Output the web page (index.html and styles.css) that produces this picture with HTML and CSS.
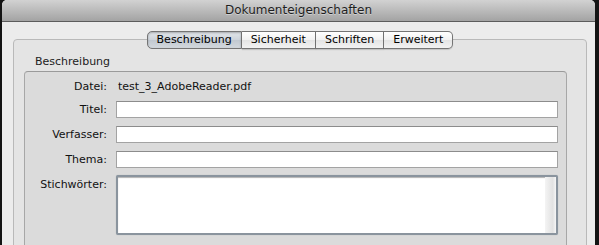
FILE: index.html
```html
<!DOCTYPE html>
<html lang="de">
<head>
  <meta charset="UTF-8">
  <meta name="viewport" content="width=device-width, initial-scale=1.0">
  <title>Dokumenteigenschaften</title>
  <link rel="stylesheet" href="styles.css">
</head>
<body>
  <div class="window">
    <div class="titlebar">Dokumenteigenschaften</div>

    <div class="content">
      <div class="tabs">
        <span class="tab selected">Beschreibung</span>
        <span class="tab">Sicherheit</span>
        <span class="tab">Schriften</span>
        <span class="tab">Erweitert</span>
      </div>

      <div class="tabbox">
        <div class="group-title">Beschreibung</div>
        <div class="group">
          <div class="row info">
            <span class="label">Datei:</span>
            <span class="value">test_3_AdobeReader.pdf</span>
          </div>
          <div class="row">
            <label class="label" for="titel">Titel:</label>
            <input class="field" type="text" id="titel">
          </div>
          <div class="row">
            <label class="label" for="verfasser">Verfasser:</label>
            <input class="field" type="text" id="verfasser">
          </div>
          <div class="row">
            <label class="label" for="thema">Thema:</label>
            <input class="field" type="text" id="thema">
          </div>
          <div class="row keywords">
            <label class="label top" for="stichwoerter">Stichwörter:</label>
            <div class="textarea">
              <textarea id="stichwoerter"></textarea>
              <div class="scroller"></div>
            </div>
          </div>
          <div class="row">
            <span class="label">Erstellt:</span>
            <span class="value">03.04.2009 14:22:10</span>
          </div>
        </div>
      </div>
    </div>
  </div>
</body>
</html>
```

FILE: styles.css
```css
body {
  margin: 0;
  padding: 0;
  background: #141414;
  font-family: "DejaVu Sans", sans-serif;
  font-size: 11px;
  color: #111;
  overflow: hidden;
}
.window {
  margin-left: 2px;
  width: 593px;
  height: 245px;
  background: #ececec;
  border-radius: 5px 5px 0 0;
  overflow: hidden;
}
.titlebar {
  height: 21px;
  line-height: 21px;
  border-bottom: 1px solid #5c5c5c;
  background: linear-gradient(#d2d2d2, #a3a3a3);
  text-align: center;
  font-size: 12px;
  color: #1e1e1e;
  text-shadow: 0 1px 0 rgba(255, 255, 255, 0.4);
}
.content {
  padding: 9px 8px 0 11px;
}
.tabs {
  display: flex;
  justify-content: center;
  position: relative;
  z-index: 1;
}
.tab {
  height: 16px;
  line-height: 16px;
  padding: 0 9px;
  border: 1px solid #747474;
  border-left: none;
  color: #000;
  background: linear-gradient(#ffffff, #f1f1f1 50%, #e4e4e4 51%, #f2f2f2);
  box-shadow: 0 1px 1px rgba(0, 0, 0, 0.15);
}
.tab:first-child {
  border-left: 1px solid #747474;
  border-radius: 5px 0 0 5px;
}
.tab:last-child {
  border-radius: 0 5px 5px 0;
}
.tab.selected {
  background: linear-gradient(#e2e6ea, #cdd3da 50%, #c1c8d0 51%, #d3d8dd);
  box-shadow: inset 0 1px 2px rgba(0, 0, 0, 0.25);
}
.tabbox {
  margin-top: -10px;
  height: 220px;
  border: 1px solid #b9b9b9;
  border-radius: 4px;
  background: #e4e4e4;
  padding: 15px 19px 0 10px;
}
.group-title {
  padding-left: 11px;
  height: 16px;
  line-height: 14px;
  color: #222;
}
.group {
  border: 1px solid #a7a7a7;
  border-top-color: #9a9a9a;
  border-radius: 4px;
  background: #dbdbdb;
  padding: 7px 8px 0 0;
  display: flex;
  flex-direction: column;
  gap: 8px;
}
.row {
  display: flex;
  align-items: center;
  gap: 9px;
}
.row.info {
  height: 14px;
}
.row.keywords {
  margin-top: -1px;
}
.label {
  width: 82px;
  flex: none;
  text-align: right;
  color: #111;
}
.label.top {
  align-self: flex-start;
  padding-top: 3px;
}
.value {
  padding-left: 2px;
  height: 17px;
  line-height: 17px;
}
.field {
  flex: 1;
  height: 17px;
  margin: 0;
  padding: 0 3px;
  border: 1px solid #a3a3a3;
  border-top-color: #8c8c8c;
  background: #fff;
  box-sizing: border-box;
  font: inherit;
}
.textarea {
  flex: 1;
  height: 60px;
  position: relative;
  border: 2px solid #8a949e;
  border-radius: 2px;
  background: #fff;
  box-sizing: border-box;
  box-shadow: inset 0 1px 1px rgba(0, 0, 0, 0.3), 0 0 1px #a0a8b0;
}
.textarea textarea {
  width: 100%;
  height: 100%;
  margin: 0;
  border: none;
  resize: none;
  outline: none;
  background: transparent;
  box-sizing: border-box;
}
.scroller {
  position: absolute;
  top: 0;
  right: 0;
  bottom: 0;
  width: 11px;
  background: linear-gradient(90deg, #f4f4f4, #e2e2e2 70%, #f6f6f6);
}
```
